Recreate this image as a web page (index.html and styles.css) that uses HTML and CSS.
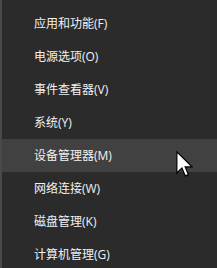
FILE: index.html
```html
<!DOCTYPE html>
<html>
	<head>
		<meta charset="utf-8">
		<link rel="stylesheet" href="styles.css">
	</head>
	<body>
		<div class="menu">
			<div class="item">应用和功能(F)</div>
			<div class="item">电源选项(O)</div>
			<div class="item">事件查看器(V)</div>
			<div class="item">系统(Y)</div>
			<div class="item hover">设备管理器(M)</div>
			<div class="item">网络连接(W)</div>
			<div class="item">磁盘管理(K)</div>
			<div class="item">计算机管理(G)</div>
		</div>
		<svg class="cursor" width="17" height="26" viewBox="0 0 12.6 19.4">
			<path d="M0.6,0.6 L0.6,16.4 L4.4,12.7 L6.9,18.6 L9.2,17.6 L6.8,11.9 L11.9,11.9 Z" fill="#fff" stroke="#000" stroke-width="0.9" stroke-linejoin="miter"/>
		</svg>
	</body>
</html>
```

FILE: styles.css
```css
html, body {
	margin: 0;
	padding: 0;
	background: #2b2b2b;
	overflow: hidden;
}

.menu {
	width: 217px;
	height: 268px;
	box-sizing: border-box;
	border-left: 2px solid #4a4a4a;
	padding-top: 7px;
	background: #2b2b2b;
	font-family: "Open Sans", "Noto Sans CJK SC", sans-serif;
	font-size: 12px;
	color: #f2f2f2;
}

.item {
	height: 33px;
	line-height: 33px;
	padding-left: 32px;
	white-space: nowrap;
}
.item.hover {
	background: #414141;
}

.cursor {
	position: absolute;
	left: 176px;
	top: 151px;
}
```
